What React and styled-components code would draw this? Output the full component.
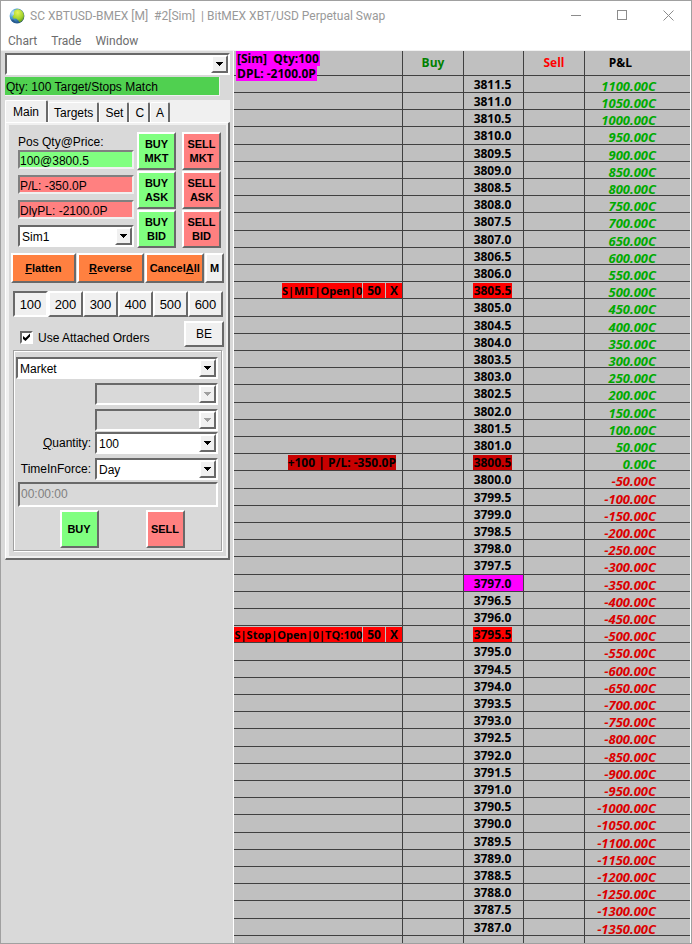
import React from "react";
import styled, { createGlobalStyle, css } from "styled-components";

const GlobalStyle = createGlobalStyle`
  * {
    box-sizing: border-box;
  }
  body {
    margin: 0;
    background: #d9d9d9;
    font-family: "Liberation Sans", Arial, sans-serif;
    font-size: 12px;
    color: #000;
  }
  button, input, select {
    font-family: inherit;
    font-size: inherit;
    color: inherit;
    margin: 0;
  }
`;

// what is working in the ladder, by price
const ORDERS = {
  "3805.5": { parts: ["S|MIT|Open|0", "50", "X"], color: "#ff0000" },
  "3800.5": { parts: ["+100 | P/L: -350.0P"], color: "#c80000", position: true },
  "3795.5": { parts: ["S|Stop|Open|0|TQ:100", "50", "X"], color: "#ff0000" },
};
const LAST_PRICE = "3797.0";

const LADDER = Array.from({ length: 50 }, (_, i) => ({
  price: (3811.5 - i * 0.5).toFixed(1),
  pl: 1100 - i * 50,
}));

function Globe() {
  return (
    <svg width="16" height="16" viewBox="0 0 16 16" aria-hidden="true">
      <defs>
        <radialGradient id="sea" cx="25%" cy="30%" r="80%">
          <stop offset="0" stopColor="#c4e8fa" />
          <stop offset="0.4" stopColor="#4a9fd8" />
          <stop offset="1" stopColor="#1c4a80" />
        </radialGradient>
        <radialGradient id="land" cx="45%" cy="25%" r="80%">
          <stop offset="0" stopColor="#e6f55a" />
          <stop offset="0.6" stopColor="#a4d22c" />
          <stop offset="1" stopColor="#4f8a1c" />
        </radialGradient>
      </defs>
      <circle cx="8" cy="8" r="7.4" fill="url(#sea)" />
      <path
        d="M6 2C8 .6 11 1 13 3C15 5 15.6 8 14.4 11C13.4 13 12 14 10.4 14.6L9.4 12.4 7 10.6 4.6 10.8 3.4 8.8 5 6.6 4.8 4.2Z"
        fill="url(#land)"
      />
      <path d="M2 11.4 4.6 11.8 7.4 14.8C5 15 3 13.6 2 11.4Z" fill="#2a5a8c" />
    </svg>
  );
}

function Combo({ label, value, disabled }) {
  return (
    <ComboBox $disabled={disabled}>
      <select aria-label={label} disabled={disabled} defaultValue={value}>
        <option>{value}</option>
      </select>
      <Arrow>
        <svg width="7" height="4" viewBox="0 0 7 4" shapeRendering="crispEdges">
          <path d="M0 0H7V1H6V2H5V3H4V4H3V3H2V2H1V1H0Z" fill="currentColor" />
        </svg>
      </Arrow>
    </ComboBox>
  );
}

function TradePanel() {
  return (
    <Side>
      <Combo label="Status" value="" />
      <Match>Qty: 100 Target/Stops Match</Match>
      <Tabs role="tablist">
        <Tab role="tab" $active>Main</Tab>
        <Tab role="tab">Targets</Tab>
        <Tab role="tab">Set</Tab>
        <Tab role="tab">C</Tab>
        <Tab role="tab">A</Tab>
      </Tabs>
      <TabBody>
        <TabInner>
          <Position>
            <Fields>
              <label htmlFor="pos">Pos Qty@Price:</label>
              <Field id="pos" $color="#80ff80" readOnly value="100@3800.5" />
              <Field aria-label="P/L" $color="#ff8080" readOnly value="P/L: -350.0P" />
              <Field aria-label="Daily P/L" $color="#ff8080" readOnly value="DlyPL: -2100.0P" />
              <Combo label="Account" value="Sim1" />
            </Fields>
            <QuickButtons>
              {["MKT", "ASK", "BID"].map((kind) => (
                <React.Fragment key={kind}>
                  <OrderButton $color="#80ff80">BUY<br />{kind}</OrderButton>
                  <OrderButton $color="#ff8080">SELL<br />{kind}</OrderButton>
                </React.Fragment>
              ))}
            </QuickButtons>
          </Position>

          <Actions>
            <OrderButton $color="#ff8040"><u>F</u>latten</OrderButton>
            <OrderButton $color="#ff8040"><u>R</u>everse</OrderButton>
            <OrderButton $color="#ff8040">Cancel<u>A</u>ll</OrderButton>
            <OrderButton $color="#f0f0f0">M</OrderButton>
          </Actions>

          <Sizes>
            {[100, 200, 300, 400, 500, 600].map((n) => (
              <SizeButton key={n} $pressed={n === 100}>{n}</SizeButton>
            ))}
          </Sizes>

          <Attach>
            <CheckLabel>
              <Check type="checkbox" defaultChecked />
              Use Attached Orders
            </CheckLabel>
            <BreakEven>BE</BreakEven>
          </Attach>

          <Ticket>
            <Combo label="Order type" value="Market" />
            <Line>
              <span />
              <Combo label="Price 1" value="" disabled />
            </Line>
            <Line>
              <span />
              <Combo label="Price 2" value="" disabled />
            </Line>
            <Line $tight>
              <span><u>Q</u>uantity:</span>
              <Combo label="Quantity" value="100" />
            </Line>
            <Line>
              <span>TimeInForce:</span>
              <Combo label="TimeInForce" value="Day" />
            </Line>
            <TimeRow>
              <TimeField aria-label="Time" disabled value="00:00:00" />
            </TimeRow>
            <Submit>
              <OrderButton $color="#80ff80">BUY</OrderButton>
              <OrderButton $color="#ff8080">SELL</OrderButton>
            </Submit>
          </Ticket>
        </TabInner>
      </TabBody>
    </Side>
  );
}

function Ladder() {
  return (
    <LadderWrap>
      <Summary>
        <span>[Sim]&nbsp; Qty:100</span>
        <span>DPL: -2100.0P</span>
      </Summary>
      <Table>
        <colgroup>
          <col width="169" />
          <col width="61" />
          <col width="60" />
          <col width="61" />
          <col />
        </colgroup>
        <thead>
          <tr>
            <th />
            <Head $color="#008000">Buy</Head>
            <th />
            <Head $color="#ff0000">Sell</Head>
            <PlHead>P&amp;L</PlHead>
          </tr>
        </thead>
        <tbody>
          {LADDER.map(({ price, pl }) => {
            const order = ORDERS[price];
            return (
              <tr key={price}>
                <td>
                  {order && (
                    <Order $position={order.position}>
                      {order.parts.map((part) => (
                        <Tag key={part} $color={order.color}>{part}</Tag>
                      ))}
                    </Order>
                  )}
                </td>
                <td />
                <Price $last={price === LAST_PRICE}>
                  <PriceText $color={order && order.color}>{price}</PriceText>
                </Price>
                <td />
                <Pl $loss={pl < 0}>{pl.toFixed(2)}C</Pl>
              </tr>
            );
          })}
          <tr>
            <td /><td /><td /><td /><td />
          </tr>
        </tbody>
      </Table>
    </LadderWrap>
  );
}

function App() {
  return (
    <>
      <GlobalStyle />
      <Window>
        <TitleBar>
          <Globe />
          <Title>SC XBTUSD-BMEX [M]&nbsp; #2[Sim]&nbsp; | BitMEX XBT/USD Perpetual Swap</Title>
          <WindowButton aria-label="Minimize">
            <svg width="11" height="11" viewBox="0 0 11 11" stroke="#8c8c8c" fill="none">
              <path d="M0 5.5H10" />
            </svg>
          </WindowButton>
          <WindowButton aria-label="Maximize">
            <svg width="11" height="11" viewBox="0 0 11 11" stroke="#8c8c8c" fill="none">
              <rect x="0.5" y="0.5" width="9" height="9" />
            </svg>
          </WindowButton>
          <WindowButton aria-label="Close">
            <svg width="11" height="11" viewBox="0 0 11 11" stroke="#8c8c8c" fill="none">
              <path d="M0.5 0.5L10.5 10.5M10.5 0.5L0.5 10.5" />
            </svg>
          </WindowButton>
        </TitleBar>
        <Menu>
          <button>Chart</button>
          <button>Trade</button>
          <button>Window</button>
        </Menu>
        <Main>
          <TradePanel />
          <Ladder />
        </Main>
      </Window>
    </>
  );
}

const raised = css`
  border: 2px solid;
  border-color: #fff #696969 #696969 #fff;
`;

const sunken = css`
  border: 2px solid;
  border-color: #696969 #fff #fff #696969;
`;

const Window = styled.div`
  min-height: 100vh;
  display: flex;
  flex-direction: column;
  border: 1px solid #a0a0a0;
  background: #fff;
`;

const TitleBar = styled.header`
  height: 29px;
  display: flex;
  align-items: center;
  padding-left: 8px;
`;

const Title = styled.h1`
  flex: 1;
  margin: 0 0 0 5px;
  font: 400 12px Roboto, "Open Sans", sans-serif;
  color: #999;
  white-space: nowrap;
`;

const WindowButton = styled.button`
  width: 46px;
  height: 29px;
  padding: 0;
  border: none;
  background: none;
  display: flex;
  align-items: center;
  justify-content: center;
`;

const Menu = styled.nav`
  height: 21px;
  display: flex;
  align-items: center;
  gap: 14px;
  padding: 2px 0 0 7px;
  border-bottom: 1px solid #f0f0f0;
  button {
    padding: 0;
    border: none;
    background: none;
    font: 400 12px Roboto, "Open Sans", sans-serif;
    color: #6d6d6d;
  }
`;

const Main = styled.main`
  flex: 1;
  display: flex;
  padding-right: 1px;
`;

const Side = styled.aside`
  flex: 0 0 233px;
  padding: 2px 3px 0 4px;
  background: #d9d9d9;
  border-right: 1px solid #fff;
`;

const ComboBox = styled.div`
  ${sunken}
  display: flex;
  height: 22px;
  flex: 1;
  background: ${(p) => (p.$disabled ? "#d9d9d9" : "#fff")};
  color: ${(p) => (p.$disabled ? "#a0a0a0" : "#000")};
  position: relative;
  select {
    appearance: none;
    width: 100%;
    height: 18px;
    padding: 1px 18px 0 2px;
    border: none;
    background: transparent;
    outline: none;
  }
`;

const Arrow = styled.span`
  ${raised}
  position: absolute;
  top: 0;
  right: 0;
  width: 17px;
  height: 18px;
  display: flex;
  align-items: center;
  justify-content: center;
  background: #f0f0f0;
  pointer-events: none;
`;

const Match = styled.div`
  width: 215px;
  height: 19px;
  margin-top: 2px;
  line-height: 20px;
  padding-left: 1px;
  background: #50d050;
  border-bottom: 1px solid #f0f0f0;
  border-right: 1px solid #f0f0f0;
`;

const Tabs = styled.div`
  display: flex;
  align-items: flex-end;
  height: 22px;
  margin-top: 4px;
  background: #f0f0f0;
`;

const Tab = styled.button`
  height: ${(p) => (p.$active ? 22 : 20)}px;
  padding: ${(p) => (p.$active ? "0 7px" : "0 4px 0 5px")};
  border: 1px solid #fff;
  border-bottom: none;
  border-right: 2px solid #696969;
  border-radius: 2px 2px 0 0;
  background: #f0f0f0;
`;

const TabBody = styled.div`
  padding: 2px 2px 2px 3px;
  border: 1px solid #fff;
  border-right: 2px solid #696969;
  border-bottom: 2px solid #696969;
  background: #f0f0f0;
`;

const TabInner = styled.div`
  padding: 7px 2px 5px;
  background: #d9d9d9;
`;

const Position = styled.div`
  display: flex;
  justify-content: space-between;
  padding: 0 3px 0 7px;
`;

const Fields = styled.div`
  width: 116px;
  display: flex;
  flex-direction: column;
  gap: 6px;
  label {
    height: 18px;
    line-height: 20px;
    margin-bottom: -6px;
  }
  & > div {
    flex: none;
  }
`;

const Field = styled.input`
  width: 100%;
  height: 19px;
  padding: 2px 0 0;
  border: 2px solid;
  border-color: #808080 #f0f0f0 #f0f0f0 #808080;
  background: ${(p) => p.$color};
  outline: none;
`;

const QuickButtons = styled.div`
  display: grid;
  grid-template-columns: 39px 39px;
  grid-auto-rows: 38px;
  gap: 1px 6px;
`;

const OrderButton = styled.button`
  ${raised}
  padding: 0;
  font-size: 11px;
  font-weight: bold;
  line-height: 14px;
  background: ${(p) => p.$color};
`;

const Actions = styled.div`
  display: grid;
  grid-template-columns: 65fr 68fr 59fr 19fr;
  grid-auto-rows: 30px;
  column-gap: 1px;
  margin-top: 5px;
`;

const Sizes = styled.div`
  display: grid;
  grid-template-columns: repeat(6, 1fr);
  grid-auto-rows: 26px;
  margin: 8px 1px 0 2px;
`;

const SizeButton = styled.button`
  ${(p) => (p.$pressed ? sunken : raised)}
  padding: 0;
  font-size: 13px;
  background: #f0f0f0;
`;

const Attach = styled.div`
  display: flex;
  justify-content: space-between;
  margin-top: 4px;
  padding-left: 9px;
`;

const CheckLabel = styled.label`
  display: flex;
  align-items: center;
  gap: 5px;
  padding-top: 7px;
`;

const Check = styled.input`
  ${sunken}
  appearance: none;
  width: 13px;
  height: 13px;
  background: #fff;
  &:checked {
    background: #fff
      url("data:image/svg+xml,%3Csvg xmlns='http://www.w3.org/2000/svg' viewBox='0 0 9 9'%3E%3Cpath d='M1 3V6L3.5 8L8 3.5V.5L3.5 5Z'/%3E%3C/svg%3E")
      center / 9px 9px no-repeat;
  }
`;

const BreakEven = styled.button`
  ${raised}
  width: 40px;
  height: 26px;
  padding: 0;
  background: #f0f0f0;
`;

const Ticket = styled.div`
  margin: 3px 2px 0;
  padding: 6px 3px 2px 2px;
  border: 1px solid #a0a0a0;
  box-shadow: inset 1px 1px #fff, 1px 1px #fff;
`;

const Line = styled.div`
  display: flex;
  align-items: center;
  margin-top: ${(p) => (p.$tight ? 1 : 4)}px;
  & > span {
    width: 79px;
    padding-right: 4px;
    text-align: right;
  }
`;

const TimeRow = styled.div`
  display: flex;
  margin-top: 2px;
  padding-left: 2px;
`;

const TimeField = styled.input`
  ${sunken}
  flex: 1;
  min-width: 0;
  height: 25px;
  padding: 0 1px 2px;
  background: #d9d9d9;
  color: #808080;
`;

const Submit = styled.div`
  display: grid;
  grid-template-columns: 39px 39px;
  grid-auto-rows: 38px;
  justify-content: center;
  column-gap: 47px;
  margin-top: 3px;
  padding-left: 10px;
`;

const LadderWrap = styled.section`
  flex: 1;
  display: flex;
  position: relative;
  background: #c0c0c0;
  font-family: "Open Sans", "Noto Sans", sans-serif;
  font-weight: 700;
`;

const Summary = styled.div`
  position: absolute;
  top: 0;
  left: 2px;
  display: flex;
  flex-direction: column;
  align-items: flex-start;
  span {
    padding: 0 1px;
    line-height: 15px;
    background: #ff00ff;
  }
`;

const Table = styled.table`
  width: 100%;
  height: 100%;
  table-layout: fixed;
  border-spacing: 0;
  line-height: 15px;
  th,
  td {
    padding: 0;
    border-right: 1px solid #404040;
    border-bottom: 1px solid #404040;
  }
  th {
    padding-bottom: 2px;
  }
  th:last-child,
  td:last-child {
    border-right: none;
  }
  thead tr {
    height: 25px;
  }
  tbody tr {
    height: 17px;
  }
  tbody tr:nth-child(5n + 4) {
    height: 18px;
  }
  tbody tr:last-child {
    height: auto;
    td {
      border-bottom: none;
    }
  }
`;

const Head = styled.th`
  color: ${(p) => p.$color};
`;

const PlHead = styled.th`
  && {
    padding-right: 34px;
  }
`;

const Order = styled.div`
  display: flex;
  justify-content: flex-end;
  gap: 1px;
  padding-right: ${(p) => (p.$position ? 6 : 0)}px;
  span:first-child {
    padding: 0;
    font-size: ${(p) => (p.$position ? 12 : 11)}px;
  }
`;

const Tag = styled.span`
  white-space: nowrap;
  background: ${(p) => p.$color};
  & + & {
    padding: 0 4px;
  }
`;

const Price = styled.td`
  text-align: center;
  background: ${(p) => (p.$last ? "#ff00ff" : "none")};
`;

const PriceText = styled.span`
  display: inline-block;
  padding: 0 1px;
  margin-right: 2px;
  vertical-align: top;
  background: ${(p) => p.$color || "none"};
`;

const Pl = styled.td`
  text-align: right;
  font-size: 13px;
  font-style: italic;
  line-height: 12px;
  color: ${(p) => (p.$loss ? "#dc0000" : "#00aa00")};
  &&& {
    padding: 3px 34px 0 0;
  }
`;

export default App;
